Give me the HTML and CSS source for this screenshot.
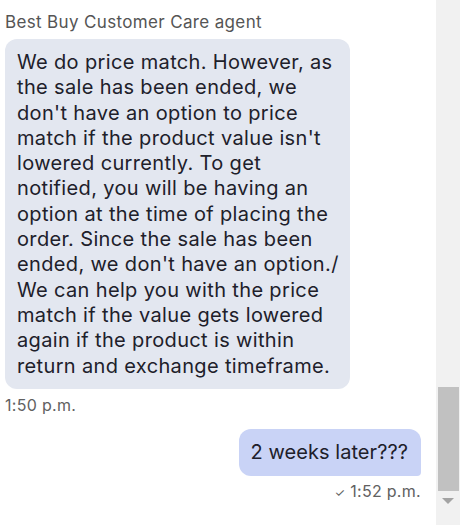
FILE: index.html
```html
<!DOCTYPE html>
<html>
<head>
<meta charset="utf-8">
<link rel="stylesheet" href="styles.css">
</head>
<body>
<div class="page">
  <div class="chat">
    <div class="sender">Best Buy Customer Care agent</div>
    <div class="bubble agent">
      <span class="ln">We do price match. However, as</span>
      <span class="ln">the sale has been ended, we</span>
      <span class="ln">don't have an option to price</span>
      <span class="ln">match if the product value isn't</span>
      <span class="ln">lowered currently. To get</span>
      <span class="ln">notified, you will be having an</span>
      <span class="ln">option at the time of placing the</span>
      <span class="ln">order. Since the sale has been</span>
      <span class="ln">ended, we don't have an option./</span>
      <span class="ln">We can help you with the price</span>
      <span class="ln">match if the value gets lowered</span>
      <span class="ln">again if the product is within</span>
      <span class="ln">return and exchange timeframe.</span>
    </div>
    <div class="time">1:50 p.m.</div>
    <div class="outgoing">
      <div class="bubble user">2 weeks later???</div>
      <div class="time right"><span class="check">✓</span> 1:52 p.m.</div>
    </div>
  </div>
  <div class="scrollbar">
    <div class="track"></div>
    <div class="thumb"></div>
    <div class="arrow"></div>
    <div class="bottom"></div>
  </div>
</div>
</body>
</html>
```
FILE: styles.css
```css
html, body {
  margin: 0;
  padding: 0;
  background: #ffffff;
}
.page {
  display: flex;
  width: 469px;
  height: 525px;
  overflow: hidden;
  font-family: Inter, "Liberation Sans", sans-serif;
}
.chat {
  width: 436px;
  flex: none;
  display: flex;
  flex-direction: column;
  align-items: flex-start;
  padding: 11px 0 0 5px;
  box-sizing: border-box;
}
.sender {
  font-size: 17px;
  line-height: 22px;
  letter-spacing: 0.35px;
  color: #555555;
  margin-bottom: 6px;
}
.bubble {
  font-size: 20px;
  line-height: 25.3px;
  letter-spacing: 0.35px;
  color: #20202a;
  border-radius: 12px;
}
.ln {
  display: block;
  white-space: nowrap;
}
.agent {
  width: 345px;
  box-sizing: border-box;
  background: #e3e7f0;
  padding: 11px 12px 10px 12px;
}
.time {
  font-size: 16px;
  line-height: 20px;
  letter-spacing: 0.3px;
  color: #616161;
  margin-top: 6px;
}
.outgoing {
  align-self: stretch;
  display: flex;
  flex-direction: column;
  align-items: flex-end;
  padding-right: 15px;
  margin-top: 14px;
}
.user {
  background: #c9d3f6;
  padding: 11px 13px 11px 12px;
  letter-spacing: 0.05px;
  border-radius: 12px 12px 4px 12px;
}
.right {
  margin-top: 5px;
}
.check {
  font-size: 12px;
}
.scrollbar {
  width: 24px;
  flex: none;
  display: flex;
  flex-direction: column;
  align-items: center;
  background: #f1f1f1;
}
.track {
  flex: 1;
}
.thumb {
  width: 21px;
  height: 104px;
  background: #c1c1c1;
}
.arrow {
  margin-top: 7px;
  width: 0;
  height: 0;
  border-left: 6px solid transparent;
  border-right: 6px solid transparent;
  border-top: 6px solid #a3a3a3;
}
.bottom {
  height: 21px;
}
```
